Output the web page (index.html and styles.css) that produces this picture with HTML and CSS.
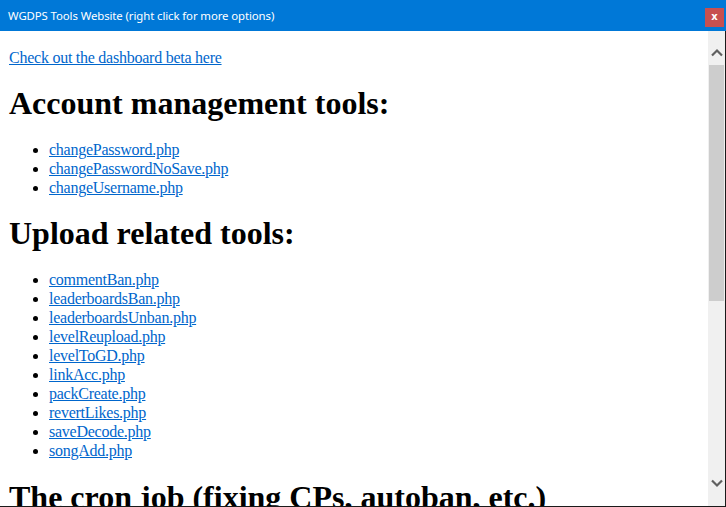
FILE: index.html
```html
<!DOCTYPE html>
<html>
<head>
<meta charset="utf-8">
<title>WGDPS Tools Website</title>
<link rel="stylesheet" href="styles.css">
</head>
<body>
<div class="window">
  <div class="titlebar">
    <span class="title">WGDPS Tools Website (right click for more options)</span>
    <span class="close">x</span>
  </div>
  <div class="main">
    <div class="page">
      <p class="top"><a href="#">Check out the dashboard beta here</a></p>
      <h1>Account management tools:</h1>
      <ul>
        <li><a href="#">changePassword.php</a></li>
        <li><a href="#">changePasswordNoSave.php</a></li>
        <li><a href="#">changeUsername.php</a></li>
      </ul>
      <h1>Upload related tools:</h1>
      <ul>
        <li><a href="#">commentBan.php</a></li>
        <li><a href="#">leaderboardsBan.php</a></li>
        <li><a href="#">leaderboardsUnban.php</a></li>
        <li><a href="#">levelReupload.php</a></li>
        <li><a href="#">levelToGD.php</a></li>
        <li><a href="#">linkAcc.php</a></li>
        <li><a href="#">packCreate.php</a></li>
        <li><a href="#">revertLikes.php</a></li>
        <li><a href="#">saveDecode.php</a></li>
        <li><a href="#">songAdd.php</a></li>
      </ul>
      <h1 class="last">The cron job (fixing CPs, autoban, etc.)</h1>
    </div>
    <div class="scrollbar">
      <div class="arrow arrow-up">
        <svg width="12" height="9" viewBox="0 0 12 9"><path d="M1 7.5 L6 2.5 L11 7.5" fill="none" stroke="#606060" stroke-width="2.2"/></svg>
      </div>
      <div class="track"><div class="thumb"></div></div>
      <div class="arrow arrow-down">
        <svg width="12" height="9" viewBox="0 0 12 9"><path d="M1 1.5 L6 6.5 L11 1.5" fill="none" stroke="#606060" stroke-width="2.2"/></svg>
      </div>
    </div>
  </div>
</div>
</body>
</html>
```

FILE: styles.css
```css
html, body {
  margin: 0;
  padding: 0;
  background: #ffffff;
}
.window {
  width: 726px;
  height: 507px;
  display: flex;
  flex-direction: column;
  overflow: hidden;
  box-sizing: border-box;
  border-bottom: 1px solid #1a1a1a;
}
.titlebar {
  height: 31px;
  flex: none;
  background: #0078d7;
  display: flex;
  align-items: flex-start;
  justify-content: space-between;
  padding-left: 8px;
  box-sizing: border-box;
}
.title {
  font-family: "Noto Sans", sans-serif;
  font-size: 11.4px;
  line-height: 16px;
  margin-top: 8px;
  color: #ffffff;
  letter-spacing: -0.1px;
}
.close {
  width: 19px;
  height: 19px;
  margin-top: 8px;
  margin-right: 2px;
  background: #c75050;
  color: #ffffff;
  font-family: "DejaVu Sans", sans-serif;
  font-size: 10px;
  font-weight: bold;
  display: flex;
  align-items: center;
  justify-content: center;
  line-height: 1;
  padding-bottom: 2px;
  box-sizing: border-box;
}
.main {
  flex: 1;
  display: flex;
  min-height: 0;
  border-right: 1px solid #1a1a1a;
}
.page {
  flex: 1;
  overflow: hidden;
  padding: 17px 8px 0 9px;
  font-family: "Liberation Serif", "Times New Roman", serif;
  font-size: 16px;
  color: #000000;
}
.page a {
  color: #0066cc;
  letter-spacing: -0.25px;
}
.top {
  margin: 0 0 18px 0;
  line-height: 19px;
}
h1 {
  font-size: 32px;
  font-weight: bold;
  line-height: 37px;
  margin: 18px 0;
}
h1.last {
  margin-top: 19px;
  white-space: nowrap;
}
ul {
  margin: 18px 0;
  padding-left: 40px;
}
li {
  line-height: 19px;
}
.scrollbar {
  width: 17px;
  flex: none;
  background: #f0f0f0;
  display: flex;
  flex-direction: column;
}
.arrow {
  flex: none;
  display: flex;
  justify-content: center;
}
.arrow-up {
  height: 34px;
  padding-top: 17px;
  box-sizing: border-box;
}
.arrow-down {
  height: 34px;
  padding-top: 7px;
  box-sizing: border-box;
}
.track {
  flex: 1;
  padding: 0 1px;
}
.thumb {
  height: 236px;
  background: #cdcdcd;
}
```
